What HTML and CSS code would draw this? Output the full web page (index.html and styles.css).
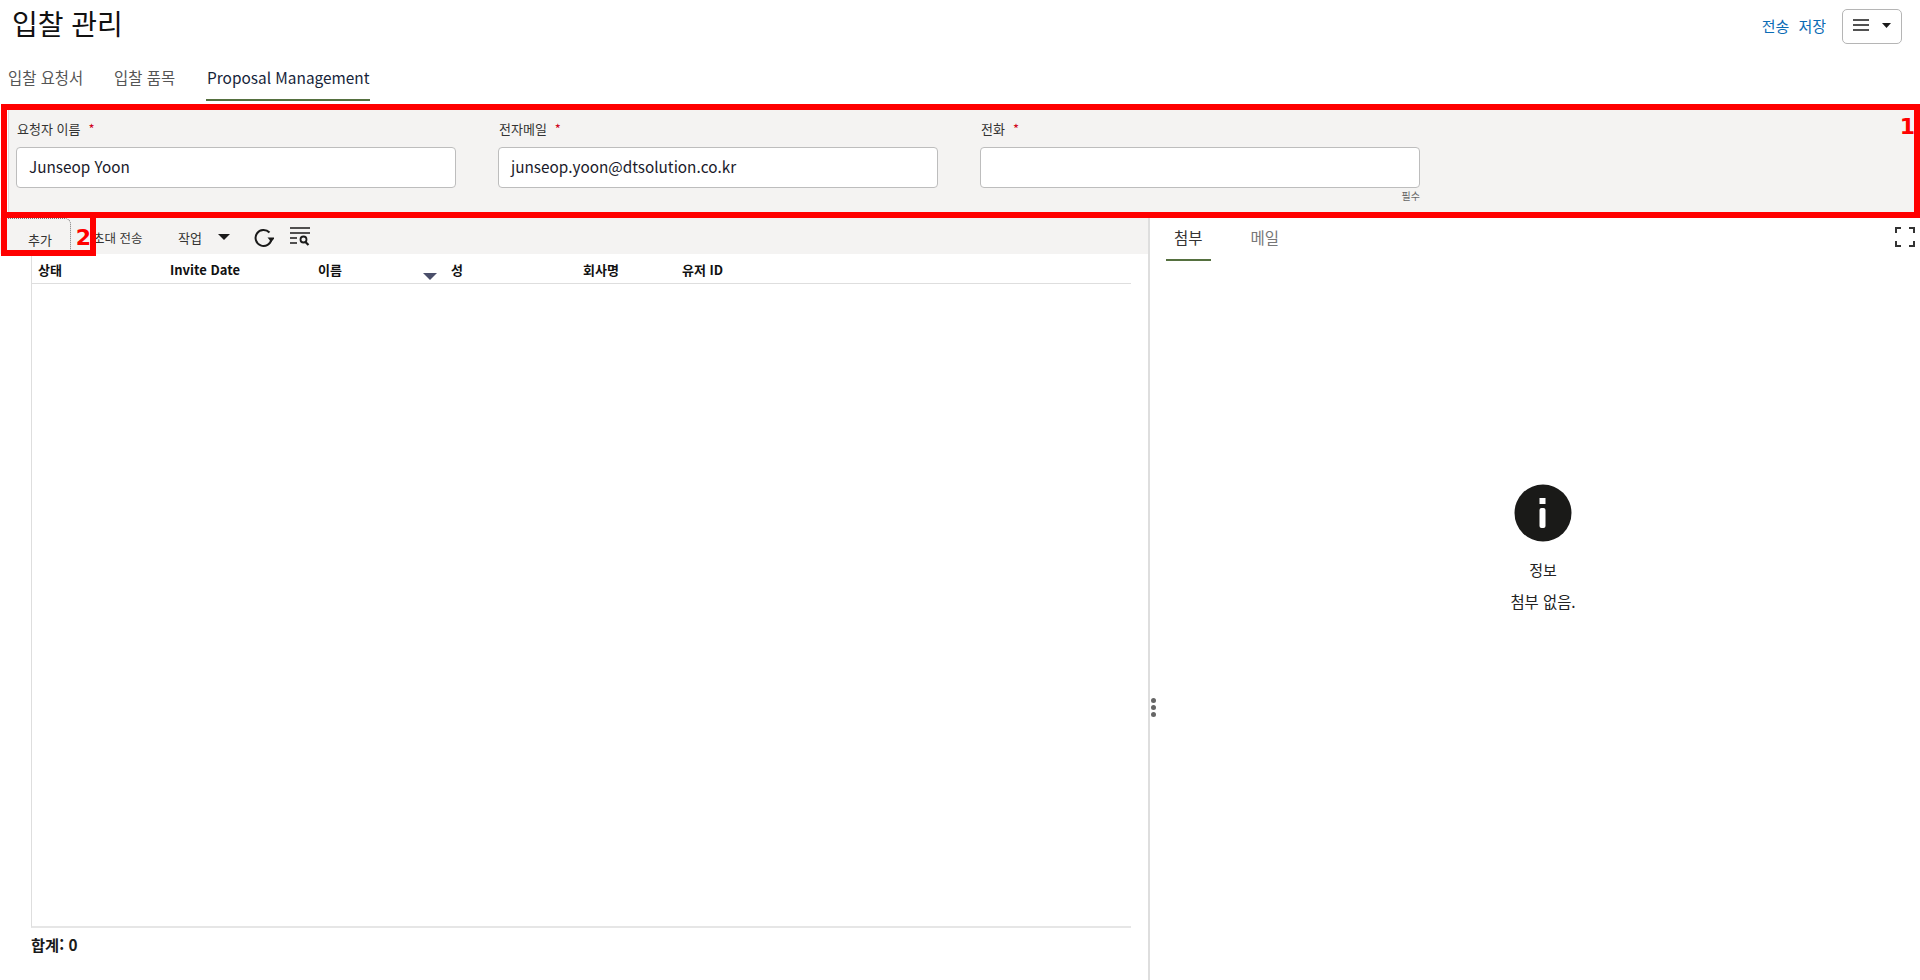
FILE: index.html
```html
<!DOCTYPE html>
<html lang="ko">
<head>
<meta charset="utf-8">
<title>입찰 관리</title>
<link rel="stylesheet" href="styles.css">
</head>
<body>
<div class="page">
  <header class="top">
    <h1 class="title">입찰 관리</h1>
    <div class="top-actions">
      <a class="link">전송</a>
      <a class="link">저장</a>
      <button class="menu-btn">
        <svg width="16" height="12" viewBox="0 0 16 12"><path d="M0 1h16M0 6h16M0 11h16" stroke="#1a1a1a" stroke-width="1.4" fill="none"/></svg>
        <svg width="9" height="5" viewBox="0 0 9 5"><path d="M0 0h9L4.500 5z" fill="#1a1a1a"/></svg>
      </button>
    </div>
  </header>
  <nav class="tabs">
    <a class="tab">입찰 요청서</a>
    <a class="tab">입찰 품목</a>
    <a class="tab active">Proposal Management</a>
  </nav>
  <section class="form-panel">
    <div class="field">
      <label class="label">요청자 이름<span class="req">*</span></label>
      <div class="input">Junseop Yoon</div>
    </div>
    <div class="field">
      <label class="label">전자메일<span class="req">*</span></label>
      <div class="input">junseop.yoon@dtsolution.co.kr</div>
    </div>
    <div class="field">
      <label class="label">전화<span class="req">*</span></label>
      <div class="input"></div>
      <div class="hint">필수</div>
    </div>
  </section>
  <div class="split">
    <section class="left">
      <div class="toolbar">
        <span class="tbtn add">추가</span>
        <span class="tbtn invite">초대 전송</span>
        <span class="tbtn work">작업</span>
        <svg class="caret" width="12" height="6" viewBox="0 0 12 6"><path d="M0 0h12L6 6z" fill="#1a1a1a"/></svg>
        <svg class="refresh" width="20" height="20" viewBox="0 0 20 20"><path d="M15.500 4.500A8 8 0 1 0 17.500 11" stroke="#1a1a1a" stroke-width="2" fill="none"/><path d="M13.500 9.500h7.500L17.200 14z" fill="#1a1a1a"/></svg>
        <svg class="filter" width="21" height="19" viewBox="0 0 21 19"><path d="M0 1h20M0 6h20M0 11h7M0 16h7" stroke="#1a1a1a" stroke-width="1.500" fill="none"/><circle cx="13.500" cy="12.500" r="3" stroke="#1a1a1a" stroke-width="1.800" fill="none"/><path d="M15.500 15l3 3" stroke="#1a1a1a" stroke-width="2.200"/></svg>
      </div>
      <div class="grid">
        <div class="grid-head">
          <span class="col c1">상태</span>
          <span class="col c2">Invite Date</span>
          <span class="col c3">이름<svg class="sort" width="14" height="7" viewBox="0 0 14 7"><path d="M0 0h14L7 7z" fill="#4a4f6a"/></svg></span>
          <span class="col c4">성</span>
          <span class="col c5">회사명</span>
          <span class="col c6">유저 ID</span>
        </div>
        <div class="grid-body"></div>
      </div>
      <div class="total">합계: 0</div>
    </section>
    <div class="divider">
      <span class="grip"><i></i><i></i><i></i></span>
    </div>
    <section class="right">
      <div class="rtabs">
        <a class="rtab active">첨부</a>
        <a class="rtab">메일</a>
        <svg class="expand" width="20" height="20" viewBox="0 0 20 20"><path d="M1 6V1h5M14 1h5v5M1 14v5h5M14 19h5v-5" stroke="#333" stroke-width="2" fill="none"/></svg>
      </div>
      <div class="empty">
        <svg class="info" width="58" height="58" viewBox="0 0 58 58"><circle cx="29" cy="29" r="28.500" fill="#1a1a18"/><rect x="25.500" y="14" width="6" height="6" fill="#fff"/><rect x="25.500" y="24" width="6" height="20" rx="2" fill="#fff"/></svg>
        <div class="empty-title">정보</div>
        <div class="empty-text">첨부 없음.</div>
      </div>
    </section>
  </div>
</div>
<div class="anno anno1"><span class="anno-num">1</span></div>
<div class="anno anno2"><span class="anno-num">2</span></div>
</body>
</html>
```
FILE: styles.css
```css
* { box-sizing: border-box; }
html, body { margin: 0; padding: 0; height: 980px; overflow: hidden; background: #fff; }
body { font-family: "Noto Sans CJK KR", "Noto Sans", sans-serif; color: #1a1a1a; position: relative; }
.page { display: flex; flex-direction: column; height: 980px; }

.top { display: flex; justify-content: space-between; align-items: flex-start; height: 58px; padding: 8px 18px 0 12px; flex: none; }
.title { margin: 0; font-size: 28px; font-weight: 400; line-height: 30px; color: #111; }
.top-actions { display: flex; align-items: center; height: 34px; margin-top: 1px; }
.link { font-size: 15px; line-height: 34px; color: #0b6cb5; margin-right: 9px; }
.link + .link { margin-right: 16px; }
.menu-btn { width: 60px; height: 35px; background: #fff; border: 1px solid #b5b5b5; border-radius: 5px; display: flex; align-items: center; justify-content: center; gap: 13px; padding: 0 0 2px; }

.tabs { display: flex; height: 43px; padding-left: 8px; gap: 31px; flex: none; }
.tab { font-size: 15.400px; line-height: 38px; height: 43px; color: #555; }
.tab.active { color: #16243a; border-bottom: 2px solid #55703f; padding-left: 1px; }

.form-panel { height: 110px; margin: 4px 3px 3px 8px; flex: none; display: grid; grid-template-columns: repeat(3, 440px); column-gap: 42px; padding: 2px 0 0 7px; background: #f4f3f2; border: 1px solid #dcdbda; border-radius: 4px; }
.label { display: block; font-size: 13px; line-height: 18px; height: 39px; padding: 12px 0 0 1px; color: #333; }
.req { color: #d0021b; margin-left: 8px; }
.input { height: 41px; background: #fff; border: 1px solid #bdbdbd; border-radius: 4px; font-size: 15.300px; line-height: 36px; padding-left: 12px; color: #1a1a2a; }
.hint { font-size: 10px; line-height: 14px; margin-top: 1px; text-align: right; color: #666; }

.split { display: flex; flex: 1; min-height: 0; }
.left { width: 1148px; flex: none; display: flex; flex-direction: column; }
.toolbar { height: 36px; background: #f4f3f2; display: flex; align-items: center; position: relative; flex: none; }
.tbtn { font-size: 13px; color: #333; line-height: 36px; padding-top: 3px; }
.add { width: 63px; margin-left: 8px; height: 36px; padding-left: 20px; border: 1px dotted #777; border-bottom: 0; border-left: 0; border-radius: 0 6px 0 0; }
.invite { margin-left: 22px; width: 85px; font-size: 12.500px; }
.work { width: 40px; }
.caret { margin-top: 1px; }
.refresh { margin-left: 24px; margin-top: 3px; }
.filter { margin-left: 16px; margin-top: 1px; }

.grid { flex: 1; min-height: 0; margin: 2px 17px 0 31px; display: flex; flex-direction: column; border-left: 1px solid #dedede; border-bottom: 2px solid #e6e6e6; }
.grid-head { height: 28px; display: grid; grid-template-columns: 132px 148px 133px 132px 99px 1fr; padding-left: 7px; border-bottom: 1px solid #dedede; flex: none; margin-left: -1px; }
.col { font-size: 13px; font-weight: 700; line-height: 28px; color: #111; position: relative; }
.sort { position: absolute; left: 105px; top: 17px; }
.grid-body { flex: 1; }
.total { height: 52px; padding: 4px 0 0 31px; font-size: 15.300px; font-weight: 700; line-height: 24px; flex: none; color: #1a1a1a; }

.divider { width: 2px; background: #dedede; flex: none; position: relative; }
.grip { position: absolute; left: 3px; top: 480px; display: flex; flex-direction: column; gap: 2px; }
.grip i { display: block; width: 5px; height: 5px; border-radius: 50%; background: #666; }

.right { flex: 1; display: flex; flex-direction: column; min-width: 0; }
.rtabs { display: flex; height: 45px; padding-left: 16px; gap: 32px; position: relative; flex: none; }
.rtab { font-size: 15.500px; line-height: 38px; height: 43px; padding: 0 8px; color: #777; }
.rtab.active { color: #333; border-bottom: 2px solid #55703f; }
.expand { position: absolute; right: 5px; top: 9px; }
.empty { display: flex; flex-direction: column; align-items: center; padding: 221px 0 0 16px; }
.info { flex: none; }
.empty-title { font-size: 15px; line-height: 22px; margin-top: 17px; color: #222; }
.empty-text { font-size: 15.400px; line-height: 22px; margin-top: 9px; color: #222; }

.anno { position: absolute; border: 6px solid #f00; pointer-events: none; }
.anno1 { left: 1px; top: 104px; width: 1919px; height: 114px; }
.anno2 { left: 1px; top: 212px; width: 95px; height: 44px; }
.anno-num { position: absolute; color: #f00; font-weight: 700; font-size: 22px; line-height: 24px; font-family: "DejaVu Sans", sans-serif; }
.anno1 .anno-num { right: -1px; top: 5px; }
.anno2 .anno-num { right: -1px; top: 8px; }
```
